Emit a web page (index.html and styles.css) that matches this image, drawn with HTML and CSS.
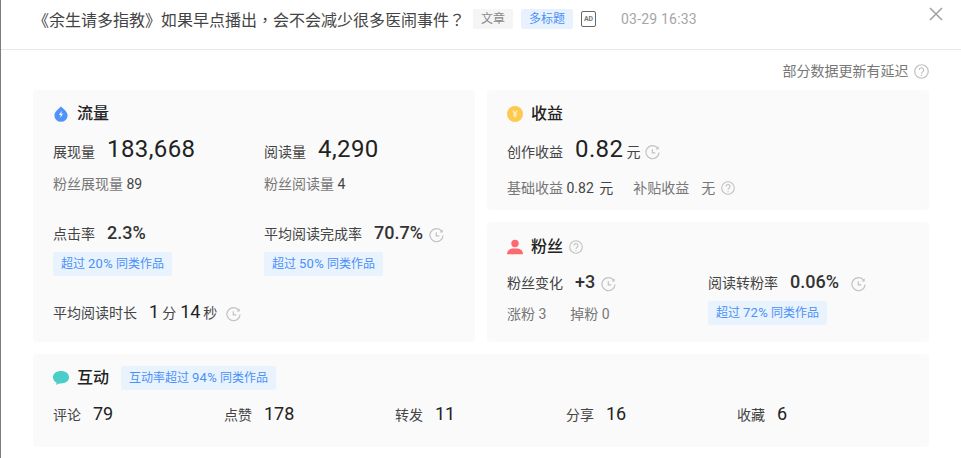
FILE: index.html
```html
<!DOCTYPE html>
<html lang="zh-CN">
<head>
<meta charset="utf-8">
<title>作品数据</title>
<link rel="stylesheet" href="styles.css">
</head>
<body>
<svg class="defs" width="0" height="0" aria-hidden="true">
  <symbol id="clock" viewBox="0 0 16 16">
    <path d="M13.500 3.300A7 7 0 1 0 15 8" fill="none" stroke="#c2c2c2" stroke-width="1.300"/>
    <path d="M14.600 1.400v3.300h-3.300Z" fill="#c2c2c2"/>
    <path d="M7.800 4.600v3.800h3.200" fill="none" stroke="#c2c2c2" stroke-width="1.300"/>
  </symbol>
  <symbol id="help" viewBox="0 0 14 14">
    <circle cx="7" cy="7" r="6.300" fill="none" stroke="#c0c0c0" stroke-width="1.100"/>
    <path d="M5 5.500a2 2 0 1 1 3.200 1.600c-.8.600-1.200.9-1.200 1.900" fill="none" stroke="#c0c0c0" stroke-width="1.100"/>
    <circle cx="7" cy="10.600" r=".7" fill="#c0c0c0"/>
  </symbol>
</svg>
<div class="modal">
  <header class="head">
    <h1 class="title" lang="zh-TW">《余生请多指教》如果早点播出，会不会减少很多医闹事件？</h1>
    <span class="tag tag-gray">文章</span>
    <span class="tag tag-blue">多标题</span>
    <span class="ad">AD</span>
    <time class="time">03-29 16:33</time>
    <svg class="close" viewBox="0 0 14 14" width="14" height="14"><path d="M1 1l12 12M13 1 1 13" stroke="#a3a3a3" stroke-width="1.600" fill="none"/></svg>
  </header>
  <p class="notice">部分数据更新有延迟 <svg class="q q-notice"><use href="#help"/></svg></p>
  <main class="board">
    <section class="card flow">
      <h2 class="card-title">
        <svg class="ico" viewBox="0 0 16 16"><path d="M8 .6C10 2.600 14.600 5.600 14.600 9.500a6.600 6.300 0 0 1-13.200 0C1.400 5.600 6 2.600 8 .6Z" fill="#4f94fb"/><path d="M8.800 4.800 6 9h1.800l-.6 2.900L10 7.800H8.200Z" fill="#fff"/></svg>
        流量
      </h2>
      <div class="two two-flow row-a">
        <div><div class="line"><span class="lab">展现量</span><b class="num big">183,668</b></div>
          <div class="sub">粉丝展现量 <span class="dark">89</span></div></div>
        <div><div class="line"><span class="lab">阅读量</span><b class="num big">4,290</b></div>
          <div class="sub">粉丝阅读量 <span class="dark">4</span></div></div>
      </div>
      <div class="two two-flow row-b">
        <div><div class="line"><span class="lab">点击率</span><b class="num mid">2.3%</b></div>
          <span class="badge">超过 <span class="pct">20%</span> 同类作品</span></div>
        <div><div class="line"><span class="lab">平均阅读完成率</span><b class="num mid">70.7%</b><svg class="cl cl-tight"><use href="#clock"/></svg></div>
          <span class="badge">超过 <span class="pct">50%</span> 同类作品</span></div>
      </div>
      <div class="line row-c"><span class="lab">平均阅读时长</span><b class="num reg">1</b><span class="unit">分</span><b class="num reg">14</b><span class="unit">秒</span><svg class="cl"><use href="#clock"/></svg></div>
    </section>
    <div class="stack">
      <section class="card income">
        <h2 class="card-title">
          <svg class="ico" viewBox="0 0 16 16"><circle cx="8" cy="8" r="8" fill="#fdc94f"/><path d="M5.800 4.600 8 7.400l2.200-2.800M8 7.400v4M6 8h4M6 9.700h4" fill="none" stroke="#fff2c8" stroke-width="1.100"/></svg>
          收益
        </h2>
        <div class="line row-income"><span class="lab">创作收益</span><b class="num big">0.82</b><span class="unit unit-yuan">元</span><svg class="cl cl-tight"><use href="#clock"/></svg></div>
        <div class="sub sub-income"><span>基础收益 <span class="dark">0.82 元</span></span><span class="gap">补贴收益</span><span class="none">无</span><svg class="q"><use href="#help"/></svg></div>
      </section>
      <section class="card fans">
        <h2 class="card-title fans-title">
          <svg class="ico ico-fan" viewBox="0 0 16 16"><circle cx="8" cy="4.500" r="3.700" fill="#fb6a6f"/><path d="M0 15.200c0-4 3-5.200 5-5.700h6c2 .5 5 1.700 5 5.700Z" fill="#fb6a6f"/></svg>
          粉丝<svg class="q q-title"><use href="#help"/></svg>
        </h2>
        <div class="two two-fans">
          <div><div class="line"><span class="lab">粉丝变化</span><b class="num mid">+3</b><svg class="cl cl-tight"><use href="#clock"/></svg></div>
            <div class="sub sub-fans"><span>涨粉 3</span><span>掉粉 0</span></div></div>
          <div><div class="line"><span class="lab">阅读转粉率</span><b class="num mid">0.06%</b><svg class="cl"><use href="#clock"/></svg></div>
            <span class="badge">超过 <span class="pct">72%</span> 同类作品</span></div>
        </div>
      </section>
    </div>
    <section class="card act">
      <h2 class="card-title act-title">
        <svg class="ico" viewBox="0 0 16 16"><path d="M8 1C12.200 1 16 3.200 16 7.200S12.200 13.400 8 13.400c-1 0-2 0-3 .6-.8.500-1.600.8-2.200.8.500-.6.800-1.200.8-2C1.400 11.700 0 9.600 0 7.200 0 3.200 3.800 1 8 1Z" fill="#4bcdc8"/></svg>
        互动<span class="badge badge-act">互动率超过 <span class="pct">94%</span> 同类作品</span>
      </h2>
      <div class="five">
        <div class="line"><span class="lab">评论</span><b class="num reg">79</b></div>
        <div class="line"><span class="lab">点赞</span><b class="num reg">178</b></div>
        <div class="line"><span class="lab">转发</span><b class="num reg">11</b></div>
        <div class="line"><span class="lab">分享</span><b class="num reg">16</b></div>
        <div class="line"><span class="lab">收藏</span><b class="num reg">6</b></div>
      </div>
    </section>
  </main>
</div>
</body>
</html>
```

FILE: styles.css
```css
* { box-sizing: border-box; }
html, body { margin: 0; padding: 0; }
body {
  width: 961px;
  height: 458px;
  overflow: hidden;
  background: #fff;
  color: #222;
  font-family: Roboto, "Noto Sans CJK SC", sans-serif;
  font-size: 14px;
}
.defs { display: block; height: 0; }
.modal {
  height: 458px;
  border-left: 1px solid #7c7c7c;
}
.head {
  height: 50px;
  display: flex;
  align-items: flex-start;
  padding: 9px 0 0 32px;
  border-bottom: 1px solid #e8e8e8;
  position: relative;
}
.title {
  margin: 0;
  font-family: "Noto Sans CJK TC", sans-serif;
  font-size: 16px;
  font-weight: 400;
  line-height: 20px;
  color: #444;
  width: 431px;
  white-space: nowrap;
}
.tag {
  height: 20px;
  line-height: 20px;
  padding: 0 8px;
  font-size: 12px;
  border-radius: 2px;
  margin-left: 9px;
}
.tag-gray { background: #f5f5f5; color: #888; }
.tag-blue { background: #e8f2ff; color: #4a90f7; margin-left: 8px; }
.ad {
  width: 15px;
  height: 16px;
  margin: 2px 0 0 8px;
  border: 1px solid #666;
  border-radius: 2px;
  font-size: 7px;
  font-weight: 700;
  line-height: 14px;
  text-align: center;
  color: #777;
}
.time {
  margin-left: 25px;
  font-size: 14px;
  letter-spacing: .2px;
  line-height: 20px;
  color: #a6a6a6;
}
.close { position: absolute; left: 928px; top: 7px; }
.notice {
  margin: 0;
  height: 40px;
  padding: 12px 32px 0 0;
  text-align: right;
  font-size: 14px;
  line-height: 18px;
  color: #777;
}
.q { width: 14px; height: 14px; vertical-align: -2px; margin-left: 1px; }
.q-notice { width: 15px; height: 15px; vertical-align: -3px; margin-left: 2px; }
.board {
  display: grid;
  grid-template-columns: 442px 442px;
  grid-template-rows: 252px 93px;
  gap: 12px;
  margin-left: 32px;
}
.card {
  background: #fafafa;
  border-radius: 4px;
  padding: 0 20px;
}
.stack { display: flex; flex-direction: column; gap: 12px; }
.income, .fans { height: 120px; }
.act { grid-column: 1 / 3; }
.card-title {
  display: flex;
  align-items: center;
  height: 34px;
  margin: 7px 0 0;
  padding: 0;
  font-size: 16px;
  font-weight: 500;
  line-height: 24px;
  color: #222;
}
.fans-title { margin-top: 8px; }
.ico { width: 16px; height: 16px; margin-right: 8px; flex: none; }
.two { display: grid; }
.two-flow { grid-template-columns: 211px 211px; }
.two-fans { grid-template-columns: 201px 201px; margin-top: 6px; }
.line { display: flex; align-items: baseline; white-space: nowrap; }
.lab { font-size: 14px; color: #444; }
.num { color: #222; margin-left: 12px; }
.big { font-size: 24px; line-height: 30px; font-weight: 400; letter-spacing: .4px; }
.mid { font-size: 18px; line-height: 24px; font-weight: 500; color: #333; }
.reg { font-size: 18px; line-height: 24px; font-weight: 400; }
.unit { font-size: 14px; color: #444; margin-left: 3px; }
.unit + .num { margin-left: 4px; }
.unit-yuan { margin-left: 3px; }
.sub { font-size: 14px; color: #777; line-height: 18px; margin-top: 11px; }
.dark { color: #444; }
.row-a { margin-top: 3px; }
.row-b { margin-top: 28px; }
.row-c { margin-top: 24px; }
.badge {
  display: inline-block;
  height: 24px;
  line-height: 24px;
  margin-top: 7px;
  padding: 0 8px;
  background: #e9f3fe;
  border-radius: 2px;
  color: #4a90f7;
  font-size: 12px;
  font-weight: 400;
}
.pct { font-size: 13px; letter-spacing: .3px; }
.cl { width: 15px; height: 15px; margin: 4px 0 0 12px; align-self: center; }
.cl-tight { margin-left: 6px; }
.unit + .cl { margin-left: 9px; }
.unit + .cl-tight { margin-left: 5px; }
.row-income { margin-top: 3px; }
.row-income .cl { margin-top: 6px; }
.sub-income { display: flex; align-items: center; margin-top: 15px; }
.sub-income .dark { word-spacing: 2px; }
.gap { margin-left: 20px; }
.none { margin-left: 12px; margin-right: 5px; }
.q-title { margin-left: 6px; }
.sub-fans { display: flex; gap: 24px; margin-top: 11px; }
.act-title { height: 32px; margin-top: 8px; }
.badge-act { margin: 0 0 0 12px; }
.five { display: grid; grid-template-columns: repeat(5, 171px); margin-top: 8px; }
```
